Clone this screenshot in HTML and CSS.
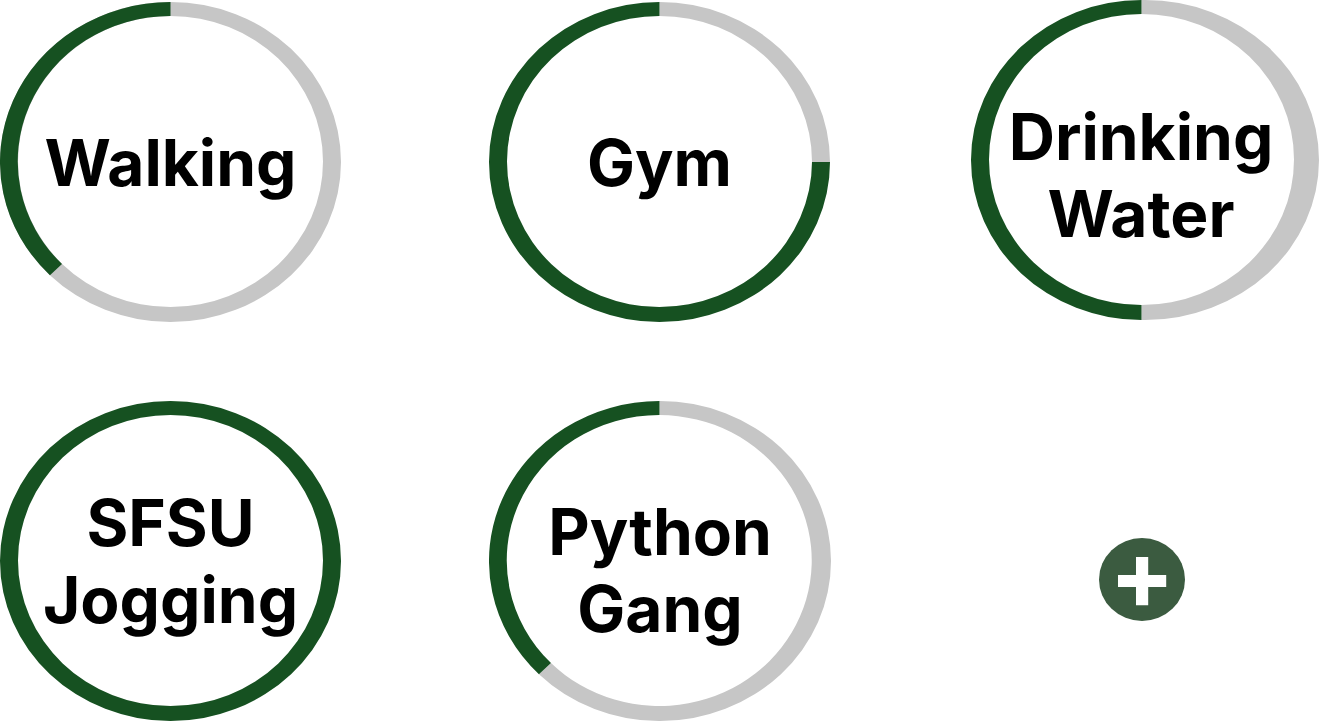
FILE: index.html
```html
<!DOCTYPE html>
<html lang="en">
<head>
<meta charset="utf-8">
<meta name="viewport" content="width=device-width, initial-scale=1">
<title>Habits</title>
<link rel="stylesheet" href="styles.css">
</head>
<body>
<ul class="habits">
  <li class="habit habit--inset">
    <svg class="ring" viewBox="0 0 341 320" width="341" height="320" aria-hidden="true">
      <path class="track" fill-rule="evenodd" d="M170.5 0A170.5 160 0 0 1 170.5 320A170.5 160 0 0 1 170.5 0ZM170.5 14A152.5 145.5 0 0 0 170.5 305A152.5 145.5 0 0 0 170.5 14Z"/>
      <path class="progress" d="M170.5 0A170.5 160 0 0 0 49.94 273.14L62 262A152.5 145.5 0 0 1 170.5 14Z"/>
    </svg>
    <span class="label">Walking</span>
  </li>
  <li class="habit habit--inset">
    <svg class="ring" viewBox="0 0 341 320" width="341" height="320" aria-hidden="true">
      <path class="track" d="M170.5 0A170.5 160 0 0 1 341 160H323A152.5 145.5 0 0 0 170.5 14Z"/>
      <path class="progress" d="M170.5 0A170.5 160 0 1 0 341 160H323A152.5 145.5 0 1 1 170.5 14Z"/>
    </svg>
    <span class="label">Gym</span>
  </li>
  <li class="habit">
    <svg class="ring" viewBox="0 0 348 320" width="348" height="320" aria-hidden="true">
      <path class="track" d="M170.5 0H174A174 160 0 0 1 174 320H170.5V305A152.5 145.5 0 0 0 170.5 14Z"/>
      <path class="progress" d="M170.5 0A170.5 160 0 0 0 170.5 320V305A152.5 145.5 0 0 1 170.5 14Z"/>
    </svg>
    <span class="label label--low label--wide">Drinking<br>Water</span>
  </li>
  <li class="habit">
    <svg class="ring" viewBox="0 0 341 320" width="341" height="320" aria-hidden="true">
      <path class="progress" fill-rule="evenodd" d="M170.5 0A170.5 160 0 0 1 170.5 320A170.5 160 0 0 1 170.5 0ZM170.5 14A152.5 145.5 0 0 0 170.5 305A152.5 145.5 0 0 0 170.5 14Z"/>
    </svg>
    <span class="label">SFSU<br>Jogging</span>
  </li>
  <li class="habit">
    <svg class="ring" viewBox="0 0 342 320" width="342" height="320" aria-hidden="true">
      <path class="track" d="M170.5 0H171A171 160 0 0 1 171 320A170.5 160 0 0 1 49.94 273.14L62 262A152.5 145.5 0 1 0 170.5 14Z"/>
      <path class="progress" d="M170.5 0A170.5 160 0 0 0 49.94 273.14L62 262A152.5 145.5 0 0 1 170.5 14Z"/>
    </svg>
    <span class="label label--mid">Python<br>Gang</span>
  </li>
  <li class="add-cell">
    <button class="add" type="button" aria-label="Add habit">
      <svg class="add-icon" viewBox="0 0 86 83" width="86" height="83" aria-hidden="true">
        <ellipse class="add-disc" cx="43" cy="41.5" rx="43" ry="41.5"/>
        <path class="add-cross" d="M37 19H49.2V37H67.2V49H49.2V67.2H37V49H19V37H37Z"/>
      </svg>
    </button>
  </li>
</ul>
</body>
</html>
```
FILE: styles.css
```css
body {
  margin: 0;
  background: #fff;
  color: #000;
  font-family: Inter, "Liberation Sans", sans-serif;
}

.habits {
  display: grid;
  grid-template-columns: 489fr 482fr 348fr;
  row-gap: 79px;
  margin: 0;
  padding: 0;
  list-style: none;
}

.habit {
  display: grid;
  align-content: start;
  justify-content: start;
}

.habit--inset {
  padding-top: 2px;
}

.ring,
.label {
  grid-area: 1 / 1;
}

.ring,
.add-icon {
  display: block;
}

.track {
  fill: #c6c6c6;
}

.progress {
  fill: #165121;
}

.label {
  place-self: center;
  font-size: 64px;
  font-weight: 700;
  line-height: 77px;
  text-align: center;
}

.label--mid {
  padding-top: 18px;
}

.label--low {
  padding-top: 30px;
}

.label--wide {
  padding-right: 8px;
}

.add-cell {
  display: flex;
  align-items: center;
  justify-content: center;
  padding: 37px 6px 0 0;
}

.add {
  padding: 0;
  border: 0;
  background: none;
  cursor: pointer;
}

.add-disc {
  fill: #3b5b40;
}

.add-cross {
  fill: #fff;
}
```
